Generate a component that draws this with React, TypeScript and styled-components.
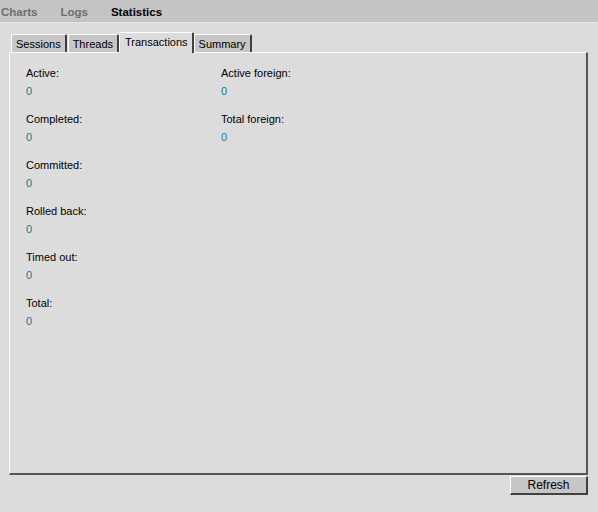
import React from "react";
import styled, { createGlobalStyle } from "styled-components";

const GlobalStyle = createGlobalStyle`
  html, body {
    margin: 0;
    padding: 0;
    background: #dcdcdc;
    font-family: "Liberation Sans", Arial, sans-serif;
  }
`;

const stats = [
  [
    { label: "Active:", value: 0 },
    { label: "Completed:", value: 0 },
    { label: "Committed:", value: 0 },
    { label: "Rolled back:", value: 0 },
    { label: "Timed out:", value: 0 },
    { label: "Total:", value: 0 },
  ],
  [
    { label: "Active foreign:", value: 0 },
    { label: "Total foreign:", value: 0 },
  ],
];

const tabs = ["Sessions", "Threads", "Transactions", "Summary"];

const App = () => {
  return (
    <Page>
      <GlobalStyle />
      <TopBar>
        <NavItem>Charts</NavItem>
        <NavItem>Logs</NavItem>
        <NavItem $active>Statistics</NavItem>
      </TopBar>
      <Content>
        <TabRow>
          {tabs.map((t) => (
            <Tab key={t} $active={t === "Transactions"}>
              {t}
            </Tab>
          ))}
        </TabRow>
        <Panel>
          {stats.map((col, i) => (
            <Column key={i}>
              {col.map((s) => (
                <Stat key={s.label}>
                  <Label>{s.label}</Label>
                  <Value>{s.value}</Value>
                </Stat>
              ))}
            </Column>
          ))}
        </Panel>
        <Footer>
          <Button>Refresh</Button>
        </Footer>
      </Content>
    </Page>
  );
};

const Page = styled.div`
  width: 598px;
  height: 512px;
  background: #dcdcdc;
`;

const TopBar = styled.div`
  display: flex;
  align-items: center;
  height: 22px;
  padding-left: 1px;
  background: #c4c4c4;
  border-bottom: 1px solid #e4e4e4;
`;

const NavItem = styled.span<{ $active?: boolean }>`
  font-size: 11.5px;
  font-weight: bold;
  color: ${(p) => (p.$active ? "#000000" : "#6e6e6e")};
  margin-right: 23px;
  padding-top: 2px;
`;

const Content = styled.div`
  padding: 9px 10px 0 9px;
`;

const TabRow = styled.div`
  display: flex;
  align-items: flex-end;
  padding-left: 2px;
  gap: 1px;
`;

const Tab = styled.div<{ $active?: boolean }>`
  position: relative;
  z-index: 1;
  font-size: 11px;
  color: #000;
  padding: 0 4px;
  height: ${(p) => (p.$active ? "20px" : "17px")};
  line-height: ${(p) => (p.$active ? "19px" : "18px")};
  margin-bottom: ${(p) => (p.$active ? "-1px" : "0")};
  margin-left: ${(p) => (p.$active ? "-1px" : "0")};
  margin-right: ${(p) => (p.$active ? "-1px" : "0")};
  padding-left: ${(p) => (p.$active ? "5px" : "4px")};
  background: ${(p) => (p.$active ? "#dcdcdc" : "#c6c6c6")};
  border-top: 1px solid #ffffff;
  border-left: 1px solid #ffffff;
  border-right: 2px solid #404040;
  border-radius: 2px 2px 0 0;
`;

const Panel = styled.div`
  display: flex;
  height: 409px;
  padding: 11px 0 0 16px;
  border-top: 1px solid #ffffff;
  border-left: 1px solid #ffffff;
  border-right: 2px solid #555555;
  border-bottom: 2px solid #555555;
`;

const Column = styled.div`
  display: flex;
  flex-direction: column;
  width: 195px;
`;

const Stat = styled.div`
  display: flex;
  flex-direction: column;
  margin-bottom: 10px;
`;

const Label = styled.span`
  font-size: 11px;
  line-height: 18px;
  color: #000;
`;

const Value = styled.span`
  font-size: 11px;
  line-height: 18px;
  color: #0f7c8c;
`;

const Footer = styled.div`
  display: flex;
  justify-content: flex-end;
  margin-top: 1px;
`;

const Button = styled.button`
  width: 78px;
  height: 19px;
  padding: 0;
  font-family: "Liberation Sans", Arial, sans-serif;
  font-size: 12px;
  color: #000;
  background: #c6c6c6;
  border-top: 1px solid #ffffff;
  border-left: 1px solid #ffffff;
  border-right: 2px solid #404040;
  border-bottom: 2px solid #404040;
`;

export default App;
